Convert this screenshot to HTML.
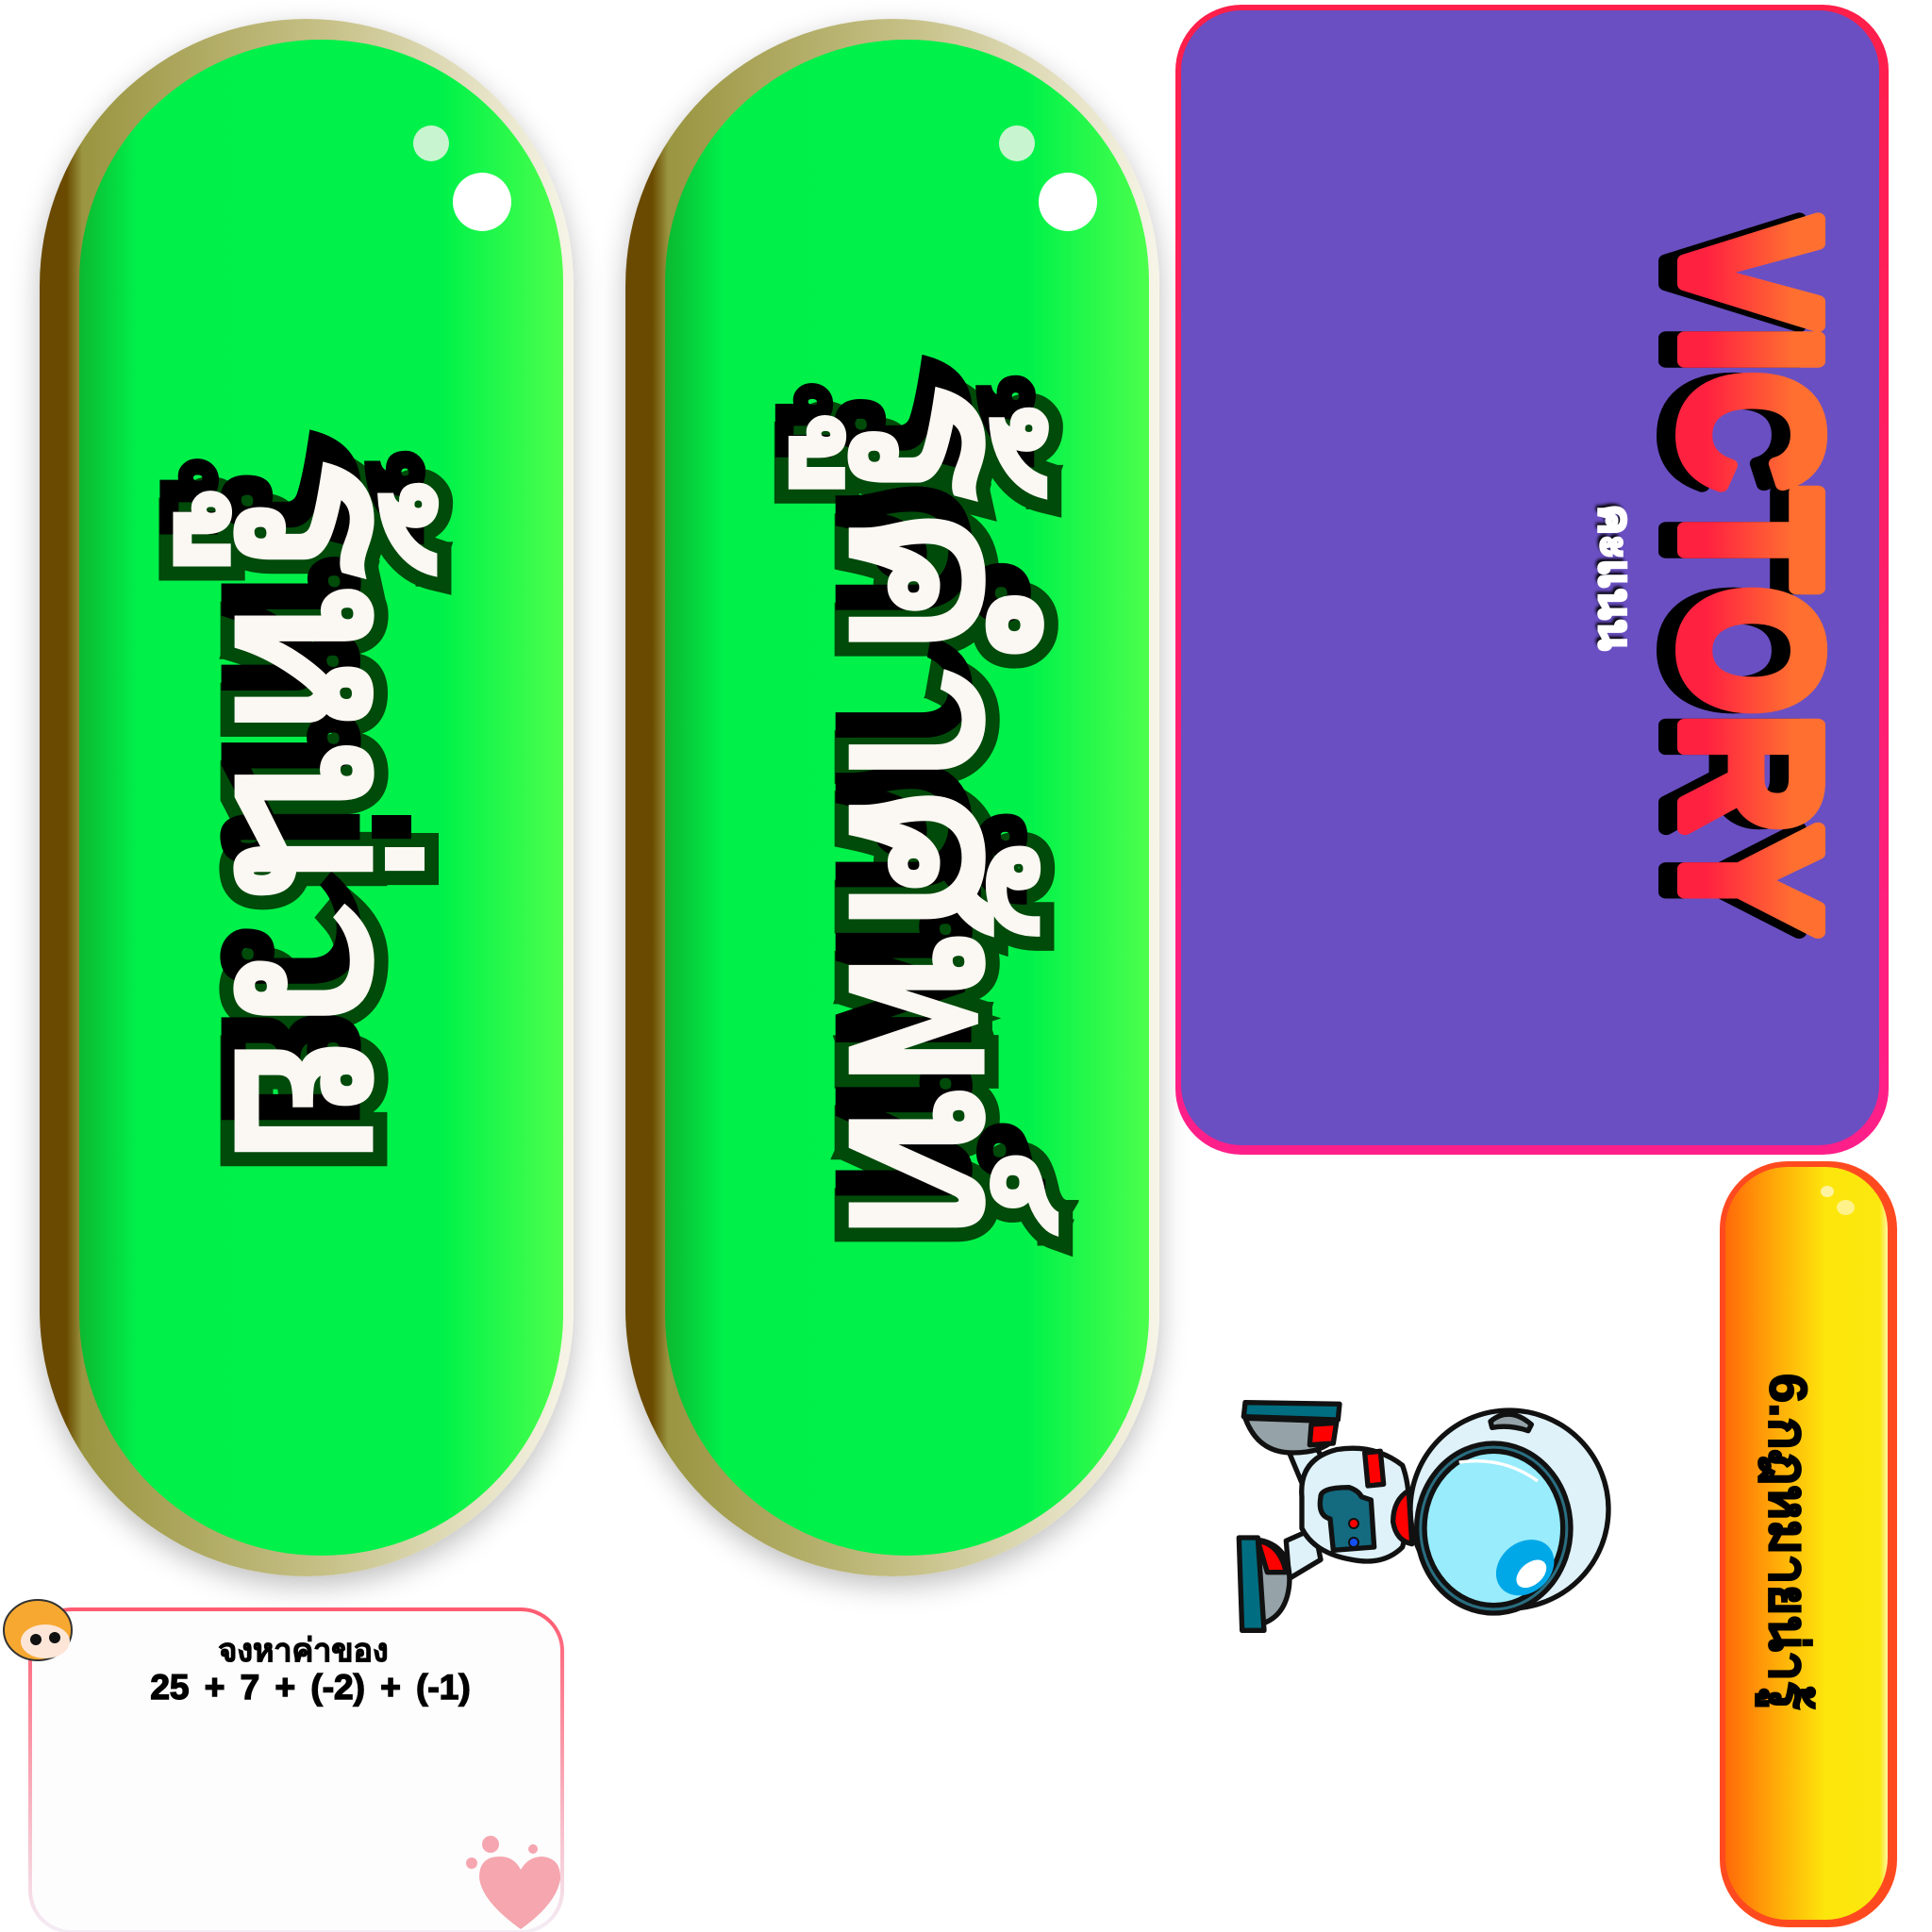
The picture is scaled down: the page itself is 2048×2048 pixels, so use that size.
<!DOCTYPE html>
<html><head><meta charset="utf-8"><style>
html,body{margin:0;padding:0;background:#fff;width:2048px;height:2048px;overflow:hidden;position:relative;font-family:"Liberation Sans","DejaVu Sans",sans-serif}
.abs{position:absolute}
.rim{border-radius:300px;background:linear-gradient(90deg,#6a4a00 0%,#6a4a00 5%,#9a9540 8%,#c8c28a 55%,#f7f5e8 100%);box-shadow:0 10px 30px rgba(0,0,0,.25)}
.grn{border-radius:260px;background:linear-gradient(90deg,#0cb830 0%,#00f04a 12%,#00f24a 75%,#4cff4c 100%)}
.dot{position:absolute;border-radius:50%;background:#fff}
.ptxt{position:absolute;white-space:nowrap;font-weight:bold;color:#fbf7f2;-webkit-text-stroke:30px #004a0a;paint-order:stroke fill;text-shadow:-34px 14px 0 #000;transform-origin:center center}
</style></head><body>

<!-- pill 1 -->
<div class="abs rim" style="left:42px;top:20px;width:566px;height:1651px"></div>
<div class="abs grn" style="left:84px;top:42px;width:513px;height:1607px"></div>
<div class="dot" style="left:438px;top:133px;width:38px;height:38px;background:#c8f5d0"></div>
<div class="dot" style="left:480px;top:183px;width:62px;height:62px"></div>
<div class="ptxt" style="left:340px;top:860px;font-size:250px;transform:translate(-50%,-50%) rotate(90deg)">รู้หน่วย</div>

<!-- pill 2 -->
<div class="abs rim" style="left:663px;top:20px;width:566px;height:1651px"></div>
<div class="abs grn" style="left:705px;top:42px;width:513px;height:1607px"></div>
<div class="dot" style="left:1059px;top:133px;width:38px;height:38px;background:#c8f5d0"></div>
<div class="dot" style="left:1101px;top:183px;width:62px;height:62px"></div>
<div class="ptxt" style="left:990px;top:858px;font-size:245px;transform:translate(-50%,-50%) rotate(90deg)">รู้คำศัพท์</div>

<!-- purple card -->
<div class="abs" style="left:1246px;top:5px;width:756px;height:1219px;border-radius:70px;background:linear-gradient(180deg,#ff1f4a,#ff1f8a);"></div>
<div class="abs" style="left:1252px;top:11px;width:740px;height:1203px;border-radius:64px;background:#6a4fc2"></div>
<svg class="abs" style="left:1740px;top:210px" width="220" height="800" viewBox="0 0 220 800">
<defs><linearGradient id="vg" x1="0" y1="0" x2="0" y2="1"><stop offset="0.3" stop-color="#ff7030"/><stop offset="0.7" stop-color="#ff2240"/></linearGradient></defs>
<text transform="translate(36,401) rotate(90)" x="0" y="10" fill="#000" stroke="#000" stroke-width="16" stroke-linejoin="round" font-family="Liberation Sans, sans-serif" font-weight="bold" font-size="205" text-anchor="middle" textLength="760" lengthAdjust="spacingAndGlyphs">VICTORY</text>
<text transform="translate(46,401) rotate(90)" x="0" y="0" fill="url(#vg)" stroke="url(#vg)" stroke-width="16" stroke-linejoin="round" font-family="Liberation Sans, sans-serif" font-weight="bold" font-size="205" text-anchor="middle" textLength="760" lengthAdjust="spacingAndGlyphs">VICTORY</text>
</svg>
<div class="abs" style="left:1712px;top:612px;white-space:nowrap;font-size:48px;font-weight:bold;color:#fff;transform:translate(-50%,-50%) rotate(90deg);-webkit-text-stroke:3px #fff;text-shadow:-4px 3px 3px #000">คะแนน</div>

<!-- orange pill -->
<div class="abs" style="left:1823px;top:1231px;width:188px;height:812px;border-radius:72px;background:#ff4a20"></div>
<div class="abs" style="left:1829px;top:1237px;width:172px;height:798px;border-radius:66px;background:linear-gradient(90deg,#ff6a08 0%,#ffa808 30%,#fde60c 62%,#fbe80e 95%,#fff6a0 100%)"></div>
<div class="dot" style="left:1930px;top:1257px;width:14px;height:12px;background:#fff3a0"></div>
<div class="dot" style="left:1947px;top:1272px;width:19px;height:16px;background:#fff28a"></div>
<div class="abs" style="left:1896px;top:1634px;white-space:nowrap;font-size:56px;font-weight:bold;color:#000;-webkit-text-stroke:2px #000;transform:translate(-50%,-50%) rotate(90deg)">6.กฎหมายน่ารู้</div>

<!-- astronaut -->
<svg class="abs" style="left:1300px;top:1480px" width="450" height="300" viewBox="0 0 1350 900">
<g stroke="#111" stroke-width="16" stroke-linejoin="round">
<path d="M200 180 L290 170 L330 240 L250 300 Z" fill="#dff2fa"/>
<path d="M190 460 L280 420 L300 520 L200 580 Z" fill="#dff2fa"/>
<path d="M60 70 Q100 180 210 180 Q300 180 340 140 L350 80 Z" fill="#95a3a8"/>
<path d="M270 90 L350 85 L340 150 L265 155 Z" fill="#f00"/>
<path d="M60 20 L360 25 L355 75 L55 65 Z" fill="#006e80"/>
<path d="M90 455 Q210 470 200 600 Q190 700 110 725 Z" fill="#95a3a8"/>
<path d="M100 460 Q170 470 190 560 L130 560 Z" fill="#f00"/>
<path d="M40 450 L100 450 L120 745 L50 745 Z" fill="#006e80"/>
<path d="M240 320 Q230 200 350 170 Q470 150 560 220 Q600 330 560 480 Q500 540 400 520 Q280 500 240 420 Z" fill="#dff2fa"/>
<path d="M440 180 L490 175 L500 280 L450 285 Z" fill="#f00"/>
<path d="M300 320 Q300 290 390 290 Q420 300 430 320 L460 330 L470 480 L340 490 L330 390 Q290 380 300 320 Z" fill="#146b80"/>
<path d="M580 300 Q530 330 530 400 Q540 460 590 470 Z" fill="#f00"/>
<circle cx="900" cy="360" r="315" fill="#dff2fa"/>
<path d="M840 80 Q900 30 970 90 L960 110 Q900 90 845 100 Z" fill="#95a3a8"/>
<ellipse cx="850" cy="420" rx="245" ry="270" fill="#2a6e80"/>
<ellipse cx="850" cy="420" rx="220" ry="245" fill="#98ecfc"/>
</g>
<circle cx="405" cy="405" r="15" fill="#f00" stroke="#111" stroke-width="6"/>
<circle cx="405" cy="465" r="15" fill="#1450f0" stroke="#111" stroke-width="6"/>
<ellipse cx="950" cy="545" rx="100" ry="80" transform="rotate(-40 950 545)" fill="#00a8e8"/>
<ellipse cx="970" cy="565" rx="55" ry="35" transform="rotate(-40 970 565)" fill="#fff"/>
<path d="M740 210 Q880 190 990 270" stroke="#fff" stroke-width="10" fill="none"/>
</svg>

<!-- white card -->
<div class="abs" style="left:30px;top:1704px;width:568px;height:346px;border-radius:46px;background:linear-gradient(180deg,#ff5a70,#f4eef6);"></div>
<div class="abs" style="left:34px;top:1708px;width:560px;height:338px;border-radius:42px;background:#fdfdfe"></div>
<div class="abs" style="left:0;top:1722px;width:643px;text-align:center;font-size:34px;font-weight:bold;color:#000;-webkit-text-stroke:1px #000">จงหาค่าของ</div>
<div class="abs" style="left:0;top:1768px;width:658px;text-align:center;font-size:37px;font-weight:bold;color:#000;-webkit-text-stroke:1.5px #000;word-spacing:6px">25 + 7 + (-2) + (-1)</div>
<svg class="abs" style="left:0;top:1690px" width="90" height="80" viewBox="0 0 90 80">
<ellipse cx="40" cy="38" rx="36" ry="32" fill="#f6a830" stroke="#333" stroke-width="2"/>
<ellipse cx="48" cy="50" rx="26" ry="18" fill="#fde6d8"/>
<circle cx="38" cy="48" r="6" fill="#111"/><circle cx="58" cy="46" r="6" fill="#111"/>
</svg>
<svg class="abs" style="left:490px;top:1940px" width="110" height="110" viewBox="0 0 110 110">
<path d="M62 105 Q20 75 18 50 Q18 28 40 28 Q55 28 62 42 Q70 28 85 28 Q105 30 104 52 Q100 78 62 105 Z" fill="#f5a6ae"/>
<circle cx="30" cy="15" r="9" fill="#f6a6b0"/><circle cx="10" cy="35" r="6" fill="#f6a6b0"/><circle cx="75" cy="20" r="5" fill="#f6a6b0"/>
</svg>
</body></html>
